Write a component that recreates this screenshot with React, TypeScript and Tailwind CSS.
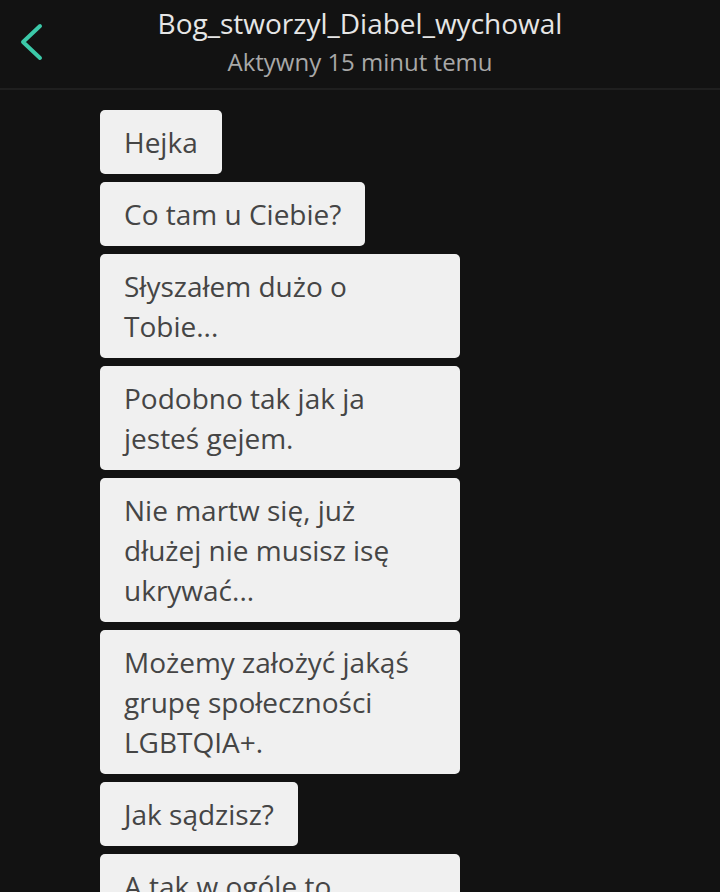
const messages = [
  "Hejka",
  "Co tam u Ciebie?",
  "Słyszałem dużo o Tobie...",
  "Podobno tak jak ja jesteś gejem.",
  "Nie martw się, już dłużej nie musisz isę ukrywać...",
  "Możemy założyć jakąś grupę społeczności LGBTQIA+.",
  "Jak sądzisz?",
  "A tak w ogóle to chciałbym Cię poznać.",
];

export default function App() {
  return (
    <div
      className="h-[892px] w-[720px] overflow-hidden bg-[#121212]"
      style={{ fontFamily: '"Open Sans", sans-serif' }}
    >
      {/* Header */}
      <div className="relative flex h-[90px] flex-col items-center border-b-2 border-[#1f1f1f] pt-[3px]">
        <button className="absolute left-[14px] top-[18px]">
          <svg width="40" height="48" viewBox="0 0 40 48" fill="none">
            <path
              d="M26 8 L9 24 L26 40"
              stroke="#3cc9a9"
              strokeWidth="4"
              strokeLinecap="round"
              strokeLinejoin="round"
            />
          </svg>
        </button>
        <h1 className="text-[28px] leading-[40px] text-[#e6e6e6]">Bog_stworzyl_Diabel_wychowal</h1>
        <p className="text-[24px] leading-[38px] text-[#a8a8a8]">Aktywny 15 minut temu</p>
      </div>

      {/* Messages */}
      <div className="flex flex-col items-start gap-2 pl-[100px] pt-[20px]">
        {messages.map((m, i) => (
          <div
            key={i}
            className="max-w-[360px] rounded-[5px] bg-[#f0f0f0] px-6 py-3 text-[28px] leading-[40px] text-[#454545]"
          >
            {m}
          </div>
        ))}
      </div>
    </div>
  );
}
